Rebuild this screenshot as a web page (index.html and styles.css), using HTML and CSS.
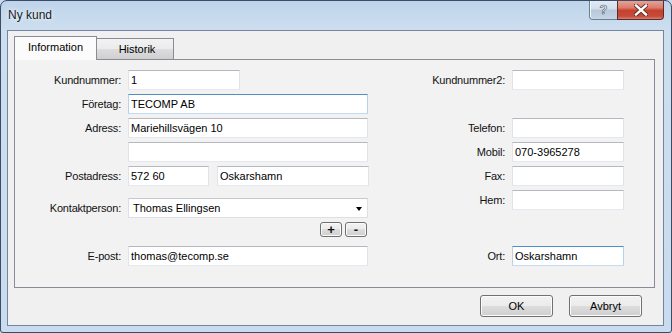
FILE: index.html
```html
<!DOCTYPE html>
<html>
<head>
<meta charset="utf-8">
<link rel="stylesheet" href="styles.css">
</head>
<body>
<div class="window">
  <div class="titlebar">
    <span class="title">Ny kund</span>
    <div class="caption">
      <div class="cap-help">?</div>
      <div class="cap-close">
        <svg width="14" height="12" viewBox="0 0 14 12">
          <path d="M2 1.5 L12 10.5 M12 1.5 L2 10.5" stroke="#5a2a24" stroke-width="4.2" stroke-linecap="square"/>
          <path d="M2 1.5 L12 10.5 M12 1.5 L2 10.5" stroke="#ffffff" stroke-width="2.4" stroke-linecap="square"/>
        </svg>
      </div>
    </div>
  </div>
  <div class="client">
    <div class="tabstrip">
      <div class="tab tab-active">Information</div>
      <div class="tab">Historik</div>
    </div>
    <div class="panel">
      <div class="col col-left">
        <div class="row"><label>Kundnummer:</label><input class="tb w112" type="text" value="1"></div>
        <div class="row"><label>Företag:</label><input class="tb w240 hot" type="text" value="TECOMP AB"></div>
        <div class="row"><label>Adress:</label><input class="tb w240" type="text" value="Mariehillsvägen 10"></div>
        <div class="row"><label></label><input class="tb w240" type="text" value=""></div>
        <div class="row"><label>Postadress:</label><input class="tb w80" type="text" value="572 60"><input class="tb w152 ml1" type="text" value="Oskarshamn"></div>
        <div class="row gap-combo"><label>Kontaktperson:</label>
          <div class="combo"><span>Thomas Ellingsen</span><span class="arrow"></span></div>
        </div>
        <div class="row-small"><button class="mini">+</button><button class="mini">-</button></div>
        <div class="row gap-email"><label>E-post:</label><input class="tb w240" type="text" value="thomas@tecomp.se"></div>
      </div>
      <div class="col col-right">
        <div class="row"><label>Kundnummer2:</label><input class="tb w112" type="text" value=""></div>
        <div class="row gap-tel"><label>Telefon:</label><input class="tb w112" type="text" value=""></div>
        <div class="row"><label>Mobil:</label><input class="tb w112" type="text" value="070-3965278"></div>
        <div class="row"><label>Fax:</label><input class="tb w112" type="text" value=""></div>
        <div class="row"><label>Hem:</label><input class="tb w112" type="text" value=""></div>
        <div class="row gap-ort"><label>Ort:</label><input class="tb w112 hot" type="text" value="Oskarshamn"></div>
      </div>
    </div>
    <div class="footer">
      <button class="btn">OK</button>
      <button class="btn">Avbryt</button>
    </div>
  </div>
</div>
</body>
</html>
```

FILE: styles.css
```css
* { box-sizing: border-box; }
html, body { margin: 0; padding: 0; }
body {
  width: 672px;
  height: 333px;
  overflow: hidden;
  font-family: "Liberation Sans", Arial, sans-serif;
  font-size: 11px;
  color: #000;
  background: #c9dbee;
}
.window {
  width: 672px;
  height: 333px;
  border: 1px solid #3b4d66;
  border-radius: 7px 7px 3px 3px;
  background: linear-gradient(180deg, #bfd4ea 0px, #cddeef 30px, #c9dbee 100%);
  display: flex;
  flex-direction: column;
  overflow: hidden;
}
.titlebar {
  height: 29px;
  display: flex;
  align-items: flex-start;
  flex: none;
}
.title {
  font-size: 12px;
  color: #1b1b1b;
  padding-left: 7px;
  line-height: 29px;
  text-shadow: 0 0 6px #eaf2fb, 0 0 3px #eaf2fb;
}
.caption {
  margin-left: auto;
  margin-right: 7px;
  margin-top: -1px;
  display: flex;
}
.cap-help {
  width: 28px;
  height: 20px;
  border: 1px solid #6d7f97;
  border-top: none;
  border-right: none;
  border-radius: 0 0 0 4px;
  background: linear-gradient(180deg, #e3ecf6 0%, #d2deeb 45%, #b8c8da 55%, #c6d5e5 100%);
  box-shadow: inset 1px 0 0 #f2f7fc;
  color: #fff;
  font-weight: bold;
  font-size: 13px;
  text-align: center;
  line-height: 19px;
  -webkit-text-stroke: 0.6px #4b5a6c;
}
.cap-close {
  width: 47px;
  height: 20px;
  border: 1px solid #5d2b26;
  border-top: none;
  border-radius: 0 0 4px 0;
  background: linear-gradient(180deg, #e8a799 0%, #dc7d6d 40%, #c8402f 55%, #c44a3a 85%, #d8826f 100%);
  display: flex;
  align-items: center;
  justify-content: center;
}
.client {
  flex: none;
  height: 296px;
  margin: 0 7px 6px 6px;
  border: 1px solid #7386a0;
  background: #f0f0f0;
  display: flex;
  flex-direction: column;
}
.tabstrip {
  display: flex;
  align-items: flex-end;
  height: 28px;
  padding-left: 6px;
}
.tab {
  height: 21px;
  width: 77px;
  border: 1px solid #898c95;
  border-bottom: none;
  border-left: none;
  background: linear-gradient(180deg, #f2f2f2 0%, #ebebeb 50%, #dddddd 50%, #cfcfcf 100%);
  text-align: center;
  line-height: 20px;
  padding-left: 4px;
}
.tab-active {
  position: relative;
  z-index: 1;
  width: 83px;
  height: 24px;
  margin-bottom: -1px;
  border-left: 1px solid #898c95;
  border-right: 1px solid #898c95;
  background: #fbfbfb;
  line-height: 21px;
  padding-left: 0;
}
.tab-active + .tab { border-left: none; }
.panel {
  margin: 0 8px 0 6px;
  height: 229px;
  border: 1px solid #898c95;
  background: #f2f2f2;
  display: grid;
  grid-template-columns: 353px 204px;
  column-gap: 52px;
  padding-top: 10px;
}
.col { display: flex; flex-direction: column; }
.row {
  display: flex;
  align-items: center;
  height: 20px;
  gap: 7px;
  margin-bottom: 4px;
}
.col-left label { width: 106px; }
.col-right label { width: 85px; }
label { text-align: right; white-space: nowrap; flex: none; letter-spacing: -0.2px; color: #111; }
.tb {
  height: 20px;
  margin: 0;
  padding: 0 2px;
  font-family: "Liberation Sans", Arial, sans-serif;
  font-size: 11px;
  color: #000;
  background: #fff;
  border: 1px solid;
  border-color: #b5b8bf #dfe3ea #e3e9ef #e2e3ea;
  outline: none;
  flex: none;
}
.tb.hot { border-color: #4f8fc5 #b7d3ec #c3dcf1 #b7d3ec; }
.w112 { width: 112px; }
.w240 { width: 240px; }
.w80 { width: 81px; }
.w152 { width: 152px; }
.ml1 { margin-left: 1px; }
.gap-combo { margin-top: 8px; }
.combo {
  width: 240px;
  height: 20px;
  background: #fff;
  border: 1px solid;
  border-color: #c6c8cd #dcdfe4 #dcdfe4 #dcdfe4;
  display: flex;
  align-items: center;
  padding-left: 4px;
  padding-right: 5px;
  justify-content: space-between;
}
.arrow {
  width: 0;
  height: 0;
  border-left: 3.5px solid transparent;
  border-right: 3.5px solid transparent;
  border-top: 4px solid #000;
  margin-top: 1px;
}
.row-small {
  display: flex;
  justify-content: flex-end;
  gap: 3px;
  height: 14px;
  padding-right: 1px;
  margin-bottom: 10px;
}
.mini {
  width: 22px;
  height: 15px;
  padding: 0;
  border: 1px solid #707070;
  border-radius: 3px;
  background: linear-gradient(180deg, #f2f2f2 0%, #ebebeb 50%, #dddddd 50%, #cfcfcf 100%);
  box-shadow: inset 0 0 0 1px #fafafa;
  font-family: "Liberation Sans", Arial, sans-serif;
  font-size: 13px;
  font-weight: bold;
  line-height: 12px;
  color: #111;
}
.gap-tel { margin-top: 24px; }
.gap-ort { margin-top: 32px; }
.footer {
  display: flex;
  justify-content: flex-end;
  gap: 16px;
  padding-right: 21px;
  margin-top: 7px;
}
.btn {
  width: 73px;
  height: 22px;
  padding: 0;
  border: 1px solid #707070;
  border-radius: 3px;
  background: linear-gradient(180deg, #f2f2f2 0%, #ebebeb 50%, #dddddd 50%, #cfcfcf 100%);
  box-shadow: inset 0 0 0 1px #fbfbfb;
  font-family: "Liberation Sans", Arial, sans-serif;
  font-size: 11px;
  color: #000;
}
```
